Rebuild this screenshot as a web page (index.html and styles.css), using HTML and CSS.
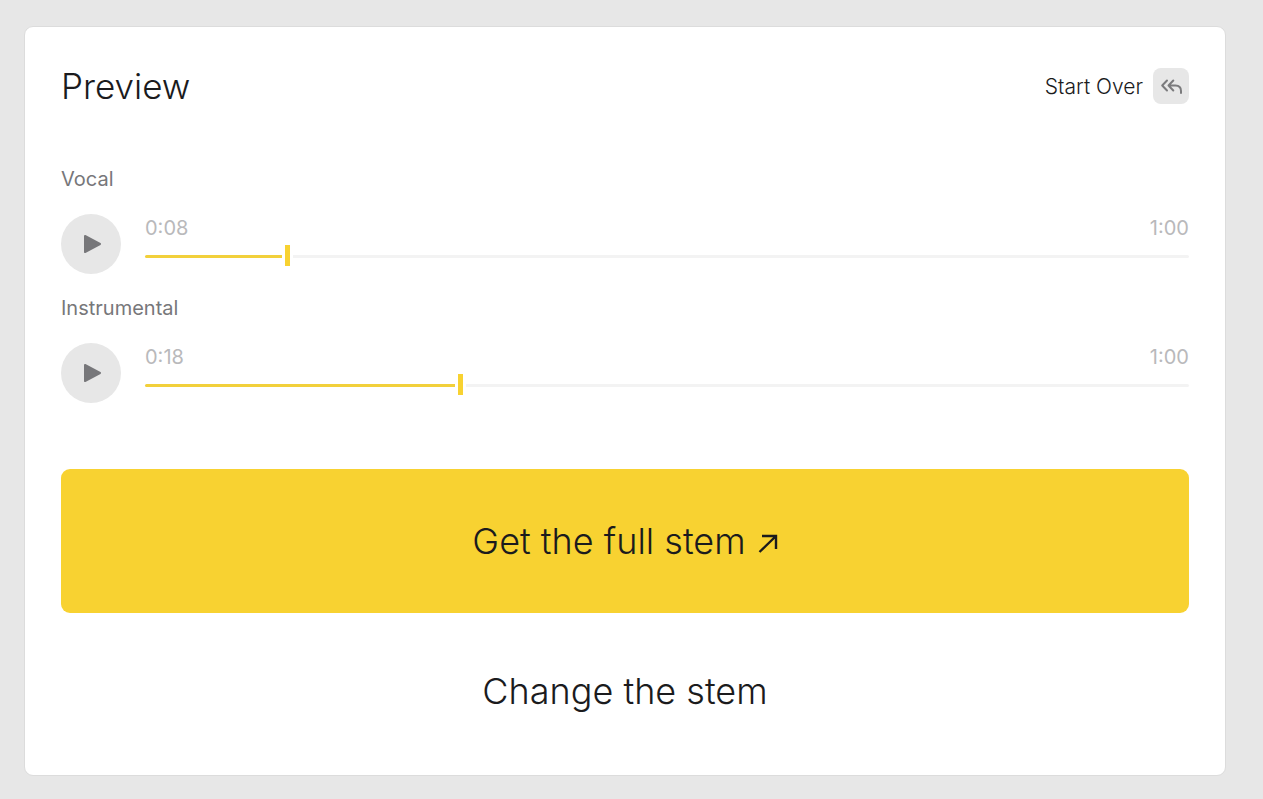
FILE: index.html
```html
<!DOCTYPE html>
<html lang="en">

<head>
    <meta charset="UTF-8" />
    <meta name="viewport" content="width=device-width, initial-scale=1.0" />
    <title>Preview</title>
    <link rel="stylesheet" href="styles.css">
</head>

<body>
    <main class="card">
        <header class="card-header">
            <h1>Preview</h1>
            <button class="start-over" type="button">
                Start Over
                <span class="start-over-icon">
                    <svg width="36" height="36" viewBox="0 0 36 36" aria-hidden="true">
                        <path d="M14 12.5 L9.2 17.5 L14 22.5 M20.3 12.5 L15.5 17.5 L20.3 22.5 M15.5 17.5 H22.5 Q28 17.5 28 23 V25" />
                    </svg>
                </span>
            </button>
        </header>

        <section class="tracks">
            <label class="track-name" for="vocal">Vocal</label>
            <div class="player">
                <button class="play" type="button" aria-label="Play vocal">
                    <svg width="60" height="60" viewBox="0 0 60 60" aria-hidden="true">
                        <path d="M24 22 L39 30 L24 38 Z" />
                    </svg>
                </button>
                <div class="timeline">
                    <div class="times">
                        <span>0:08</span>
                        <span>1:00</span>
                    </div>
                    <input class="seek" id="vocal" type="range" min="0" max="60" step="0.1" value="8.1" style="--played: 13.5%">
                </div>
            </div>

            <label class="track-name" for="instrumental">Instrumental</label>
            <div class="player">
                <button class="play" type="button" aria-label="Play instrumental">
                    <svg width="60" height="60" viewBox="0 0 60 60" aria-hidden="true">
                        <path d="M24 22 L39 30 L24 38 Z" />
                    </svg>
                </button>
                <div class="timeline">
                    <div class="times">
                        <span>0:18</span>
                        <span>1:00</span>
                    </div>
                    <input class="seek" id="instrumental" type="range" min="0" max="60" step="0.1" value="18.1" style="--played: 30.2%">
                </div>
            </div>
        </section>

        <button class="btn btn-primary" type="button">
            Get the full stem
            <svg width="20" height="24" viewBox="0 0 20 24" aria-hidden="true">
                <path d="M1.5 23 L18 7 M4 7 H18 V20" />
            </svg>
        </button>
        <button class="btn btn-plain" type="button">Change the stem</button>
    </main>
    <script>
        // keep the yellow part of the bar in step with the thumb
        document.querySelectorAll(".seek").forEach(function (seek) {
            seek.addEventListener("input", function () {
                seek.style.setProperty("--played", (seek.value / seek.max) * 100 + "%");
            });
        });
    </script>
</body>

</html>
```
FILE: styles.css
```css
* {
    box-sizing: border-box;
}

body {
    margin: 0;
    padding: 26px 37px 23px 24px;
    background-color: #e7e7e7;
    color: #1b1b1d;
    font-family: Inter, "Liberation Sans", sans-serif;
    font-weight: 300;
}

button {
    border: 0;
    padding: 0;
    background: none;
    color: inherit;
    font: inherit;
    cursor: pointer;
}

svg {
    display: block;
}

.card {
    display: flex;
    flex-direction: column;
    padding: 36px;
    background-color: white;
    border: 1px solid #dcdcdc;
    border-radius: 9px;
}

.card-header {
    display: flex;
    align-items: center;
    justify-content: space-between;
    height: 46px;
    margin-bottom: 56px;
}

h1 {
    margin: 0;
    font-size: 35px;
    font-weight: 300;
}

.start-over {
    display: flex;
    align-items: center;
    gap: 10px;
    font-size: 21px;
}

.start-over-icon {
    background-color: #e7e7e7;
    border-radius: 8px;
}

.start-over-icon path {
    fill: none;
    stroke: #7b7b7d;
    stroke-width: 2;
    stroke-linecap: round;
    stroke-linejoin: round;
}

.tracks {
    display: flex;
    flex-direction: column;
    gap: 20px;
    margin-bottom: 66px;
}

.track-name {
    color: #77777a;
    font-size: 20px;
    font-weight: 400;
    line-height: 29px;
}

.player {
    display: flex;
    gap: 24px;
}

.play {
    flex: none;
    border-radius: 50%;
    background-color: #e7e7e7;
}

.play path {
    fill: #77777a;
    stroke: #77777a;
    stroke-width: 2;
    stroke-linejoin: round;
}

.timeline {
    flex: 1;
}

.times {
    display: flex;
    justify-content: space-between;
    margin-bottom: 2px;
    color: #b9b9bb;
    font-size: 20px;
    font-weight: 400;
    line-height: 29px;
}

.seek {
    -webkit-appearance: none;
    appearance: none;
    display: block;
    width: 100%;
    height: 23px;
    margin: 0;
    background: none;
}

.seek::-webkit-slider-runnable-track {
    height: 3px;
    border-radius: 2px;
    background: linear-gradient(to right, #f2d03b var(--played), #f3f3f3 var(--played));
}

/* the white ring leaves a gap in the bar on both sides of the thumb */
.seek::-webkit-slider-thumb {
    -webkit-appearance: none;
    appearance: none;
    width: 5px;
    height: 21px;
    margin-top: -10px;
    background-color: #f8d231;
    box-shadow: 0 0 0 3px white;
}

.btn {
    display: flex;
    align-items: center;
    justify-content: center;
    gap: 12px;
    font-size: 36px;
}

.btn-primary {
    height: 144px;
    margin-bottom: 30px;
    background-color: #f8d231;
    border-radius: 9px;
}

.btn-primary path {
    fill: none;
    stroke: #1b1b1d;
    stroke-width: 2.4;
}

.btn-plain {
    height: 96px;
}
```
